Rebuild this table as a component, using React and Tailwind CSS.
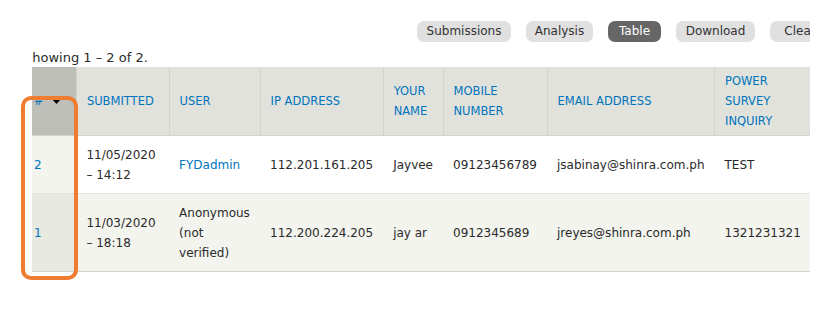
import React from 'react';

const tabs = [
  { label: 'Submissions', width: 'w-[94px]' },
  { label: 'Analysis', width: 'w-[67px]' },
  { label: 'Table', width: 'w-[53px]', active: true },
  { label: 'Download', width: 'w-[79px]' },
  { label: 'Clear', width: 'w-[60px]' },
];

const columns = [
  { label: '#', width: 'w-[53px]', sorted: true },
  { label: 'Submitted', width: 'w-[93px]' },
  { label: 'User', width: 'w-[91px]' },
  { label: 'IP Address', width: 'w-[123px]' },
  { label: 'Your Name', width: 'w-[58px]' },
  { label: 'Mobile Number', width: 'w-[103px]' },
  { label: 'Email Address', width: 'w-[163px]' },
  { label: 'Power Survey Inquiry', width: 'w-[96px]' },
  { label: '', width: 'w-[120px]' },
];

const rows = [
  {
    sid: 2,
    submitted: ['11/05/2020', '– 14:12'],
    user: 'FYDadmin',
    userLink: true,
    ip: '112.201.161.205',
    name: 'Jayvee',
    mobile: '09123456789',
    email: 'jsabinay@shinra.com.ph',
    inquiry: 'TEST',
  },
  {
    sid: 1,
    submitted: ['11/03/2020', '– 18:18'],
    user: 'Anonymous (not verified)',
    ip: '112.200.224.205',
    name: 'jay ar',
    mobile: '0912345689',
    email: 'jreyes@shinra.com.ph',
    inquiry: '1321231321',
  },
];

const cell = 'px-[10px] pt-[9px] pb-[8px] align-middle';

const App = () => {
  return (
    <div className="relative w-[829px] h-[329px] overflow-hidden bg-white text-[#2a2a2a] font-['DejaVu_Sans',sans-serif] text-[12px] leading-[20px]">
      <div className="ml-[32px] w-[778px] overflow-hidden">
        <div className="ml-[-8px] w-[900px] pt-[21px]">
          {/* secondary tabs */}
          <div className="flex gap-[15px] pl-[393px]">
            {tabs.map((tab) => (
              <span
                key={tab.label}
                className={`${tab.width} shrink-0 h-[21px] rounded-[7px] text-center leading-[21px] ${
                  tab.active ? 'bg-[#666] text-white' : 'bg-[#e0e0e0] text-[#333]'
                }`}
              >
                {tab.label}
              </span>
            ))}
          </div>

          <div className="mt-[6px] mb-[-1px] text-[13px] leading-[20px]">Showing 1 – 2 of 2.</div>

          <table className="table-fixed border-collapse text-left">
            <thead>
              <tr className="bg-[#e1e2dc] border-b border-[#d3d4cd]">
                {columns.map((col, i) => (
                  <th
                    key={i}
                    className={`${col.width} px-[10px] py-[4px] font-normal uppercase text-[11.5px] text-[#0074bd] align-middle border-l border-[#d3d4cd] first:border-l-0 ${
                      col.sorted ? 'bg-[#bebfb9]' : ''
                    }`}
                  >
                    {col.sorted ? (
                      <span className="flex items-center justify-between pr-[5px]">
                        {col.label}
                        <svg width="9" height="5" viewBox="0 0 9 5">
                          <path d="M0 0h9L4.5 5z" fill="#000" />
                        </svg>
                      </span>
                    ) : (
                      col.label
                    )}
                  </th>
                ))}
              </tr>
            </thead>
            <tbody>
              {rows.map((row, i) => (
                <tr
                  key={row.sid}
                  className={`${i % 2 ? 'bg-[#f3f4ee]' : 'bg-white'} border-b border-[#e4e5df] last:border-[#d3d4cd]`}
                >
                  <td className={`${cell} text-[#0074bd] ${i % 2 ? 'bg-[#e8e9e1]' : 'bg-[#f3f4ee]'}`}>
                    {row.sid}
                  </td>
                  <td className={cell}>
                    {row.submitted[0]}
                    <br />
                    {row.submitted[1]}
                  </td>
                  <td className={`${cell} ${row.userLink ? 'text-[#0074bd]' : ''}`}>{row.user}</td>
                  <td className={cell}>{row.ip}</td>
                  <td className={cell}>{row.name}</td>
                  <td className={cell}>{row.mobile}</td>
                  <td className={cell}>{row.email}</td>
                  <td className={cell}>{row.inquiry}</td>
                  <td className={cell}></td>
                </tr>
              ))}
            </tbody>
          </table>
        </div>
      </div>

      {/* highlight around the sid column */}
      <div className="absolute left-[21px] top-[96px] w-[57px] h-[184px] border-[4px] border-[#ee7d31] rounded-[10px]" />
    </div>
  );
};

export default App;
